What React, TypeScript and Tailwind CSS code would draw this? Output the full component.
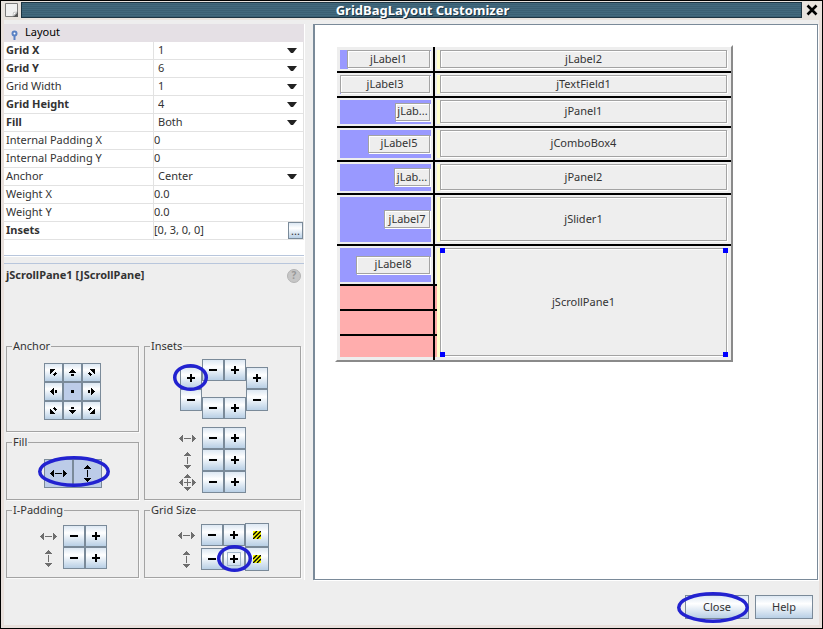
import type { ReactNode } from "react";

type Property = {
  name: string;
  value: string;
  bold?: boolean;
  kind: "choice" | "text" | "custom";
};

const properties: Property[] = [
  { name: "Grid X", value: "1", bold: true, kind: "choice" },
  { name: "Grid Y", value: "6", bold: true, kind: "choice" },
  { name: "Grid Width", value: "1", kind: "choice" },
  { name: "Grid Height", value: "4", bold: true, kind: "choice" },
  { name: "Fill", value: "Both", bold: true, kind: "choice" },
  { name: "Internal Padding X", value: "0", kind: "text" },
  { name: "Internal Padding Y", value: "0", kind: "text" },
  { name: "Anchor", value: "Center", kind: "choice" },
  { name: "Weight X", value: "0.0", kind: "text" },
  { name: "Weight Y", value: "0.0", kind: "text" },
  { name: "Insets", value: "[0, 3, 0, 0]", bold: true, kind: "custom" },
];

const metal =
  "border border-[#7a8a99] bg-linear-to-b from-[#dde8f3] via-white via-35% to-[#b8cfe5]";
const etched =
  "border border-[#a3a3a3] bg-[#eeeeee] shadow-[1px_1px_0_#fff,inset_1px_1px_0_#fff]";

function Ring({ className, w, h }: { className: string; w: number; h: number }) {
  return (
    <svg
      className={`pointer-events-none absolute z-10 ${className}`}
      width={w}
      height={h}
      aria-hidden="true"
    >
      <ellipse
        cx={w / 2}
        cy={h / 2}
        rx={w / 2 - 1.75}
        ry={h / 2 - 1.75}
        fill="none"
        stroke="#2222d0"
        strokeWidth="3.5"
      />
    </svg>
  );
}

function StepButton({ sign, label, focused }: { sign: "+" | "-"; label: string; focused?: boolean }) {
  return (
    <button
      type="button"
      aria-label={label}
      className={`relative flex size-[22px] items-center justify-center ${metal}`}
    >
      {focused && <span className="absolute inset-[3px] border border-[#a3b8cc]" />}
      <svg className="relative" width="8" height="8" shapeRendering="crispEdges" aria-hidden="true">
        <path d={sign === "+" ? "M0 3h8v2H0zM3 0h2v8H3z" : "M0 3h8v2H0z"} />
      </svg>
    </button>
  );
}

function Pair({ label, focused }: { label: string; focused?: boolean }) {
  return (
    <div className="flex">
      <StepButton sign="-" label={`Decrease ${label}`} />
      <StepButton sign="+" label={`Increase ${label}`} focused={focused} />
    </div>
  );
}

function AxisIcon({ axis, color = "#6e6e6e" }: { axis: "h" | "v" | "both"; color?: string }) {
  return (
    <svg width="17" height="17" fill={color} shapeRendering="crispEdges" aria-hidden="true">
      {axis !== "v" && (
        <path d="M0 8h1v1H0zM1 7h1v3H1zM2 6h1v5H2zM3 5h1v7H3zM16 8h1v1h-1zM15 7h1v3h-1zM14 6h1v5h-1zM13 5h1v7h-1zM5 8h7v1H5z" />
      )}
      {axis !== "h" && (
        <path d="M8 0h1v1H8zM7 1h3v1H7zM6 2h5v1H6zM5 3h7v1H5zM8 16h1v1H8zM7 15h3v1H7zM6 14h5v1H6zM5 13h7v1H5zM8 5h1v7H8z" />
      )}
    </svg>
  );
}

function AnchorIcon({ dir }: { dir: string }) {
  const straight = "M3 0h1v1H3zM2 1h3v1H2zM1 2h5v1H1zM0 3h7v1H0zM2 5h3v2H2z";
  const diagonal =
    "M0 0h5v1H0zM0 1h4v1H0zM0 2h3v1H0zM0 3h2v1H0zM0 4h1v1H0zM5 3h1v1H5zM4 4h3v1H4zM3 5h3v1H3zM4 6h1v1H4z";
  const turns: Record<string, string> = {
    N: "",
    S: "rotate(180 3.5 3.5)",
    W: "rotate(-90 3.5 3.5)",
    E: "rotate(90 3.5 3.5)",
    NW: "",
    NE: "rotate(90 3.5 3.5)",
    SE: "rotate(180 3.5 3.5)",
    SW: "rotate(-90 3.5 3.5)",
  };
  return (
    <svg width="7" height="7" shapeRendering="crispEdges" aria-hidden="true">
      {dir === "C" ? (
        <path d="M2 2h3v3H2z" />
      ) : (
        <path d={dir.length === 2 ? diagonal : straight} transform={turns[dir]} />
      )}
    </svg>
  );
}

function GapButton({ label }: { label: string }) {
  return (
    <button
      type="button"
      aria-label={label}
      className={`flex size-6 items-center justify-center ${metal}`}
    >
      <svg width="8" height="8" aria-hidden="true">
        <rect width="8" height="8" fill="#ffff00" />
        <path d="M0 4L4 0M0 8L8 0M4 8L8 4" stroke="#000" strokeWidth="1.4" />
      </svg>
    </button>
  );
}

function Group({ title, className, children }: { title: string; className: string; children: ReactNode }) {
  return (
    <fieldset
      className={`min-w-0 border border-[#a3a3a3] shadow-[1px_1px_0_#fafafa] ${className}`}
    >
      <legend className="ml-[5px] h-[14px] px-px leading-[14px]">{title}</legend>
      {children}
    </fieldset>
  );
}

function PropertyRow({ name, value, bold, kind }: Property) {
  const id = name.toLowerCase().replace(/ /g, "-");
  return (
    <tr className="h-[18px]">
      <th
        scope="row"
        className={`w-1/2 border-r border-b border-[#e2e2e2] p-0 pl-[2px] text-left ${bold ? "font-bold" : "font-normal"}`}
      >
        <label htmlFor={id} className="block h-[17px] leading-4">
          {name}
        </label>
      </th>
      <td className="border-r border-b border-[#e2e2e2] p-0">
        {kind === "choice" ? (
          <div className="relative">
            <select
              id={id}
              defaultValue={value}
              className="block h-[17px] w-full appearance-none bg-white pb-[2px] pl-1 leading-[15px] outline-none"
            >
              <option>{value}</option>
            </select>
            <svg
              className="pointer-events-none absolute top-[6px] right-[6px]"
              width="10"
              height="5"
              aria-hidden="true"
            >
              <path d="M0 0H10L6 5H4Z" fill="#222" />
            </svg>
          </div>
        ) : (
          <div className="flex h-[17px]">
            <input
              id={id}
              defaultValue={value}
              className="h-[17px] min-w-0 flex-1 bg-white pb-[2px] leading-[15px] outline-none"
            />
            {kind === "custom" && (
              <button
                type="button"
                aria-label="Edit insets"
                className={`h-[17px] w-[15px] leading-[14px] ${metal}`}
              >
                ...
              </button>
            )}
          </div>
        )}
      </td>
    </tr>
  );
}

type GridRow = { left: string; leftClass: string; right: string; height: string; pad: string };

const gridRows: GridRow[] = [
  { left: "jLabel1", leftClass: "w-[83px]", right: "jLabel2", height: "h-[26px]", pad: "pt-[3px]" },
  { left: "jLabel3", leftClass: "w-[90px]", right: "jTextField1", height: "h-[25px]", pad: "pt-[2px]" },
  { left: "jLab...", leftClass: "w-[35px]", right: "jPanel1", height: "h-[30px]", pad: "pt-[2px]" },
  { left: "jLabel5", leftClass: "w-[62px]", right: "jComboBox4", height: "h-[34px]", pad: "pt-[2px]" },
  { left: "jLab...", leftClass: "w-[36px]", right: "jPanel2", height: "h-[33px]", pad: "pt-[2px]" },
  { left: "jLabel7", leftClass: "w-[46px]", right: "jSlider1", height: "h-[51px]", pad: "pt-[2px]" },
];

function LabelCell({ text, className }: { text: string; className: string }) {
  return (
    <div className="flex flex-1 items-center justify-end bg-[#9999ff] pr-px pb-px">
      <div className={`flex h-[18px] items-center justify-center ${etched} ${className}`}>{text}</div>
    </div>
  );
}

function SpareCells() {
  return (
    <>
      <div className="h-[25px] border-t-2 border-black bg-[#ffadad]" />
      <div className="h-[25px] border-t-2 border-black bg-[#ffadad]" />
      <div className="flex-1 border-t-2 border-black bg-[#ffadad]" />
    </>
  );
}

function DesignGrid() {
  return (
    <div className="border-2 border-t-white border-r-[#8a8a8a] border-b-[#8a8a8a] border-l-white bg-[#eeeeee]">
      {gridRows.map((row) => (
        <div key={row.right} className={`flex border-b-2 border-black ${row.height}`}>
          <div className={`flex w-[98px] border-r-2 border-black pr-[2px] pb-[2px] pl-[3px] ${row.pad}`}>
            <LabelCell text={row.left} className={row.leftClass} />
          </div>
          <div className={`flex flex-1 pr-[3px] pb-[2px] pl-[2px] ${row.pad}`}>
            <div className="w-[3px] bg-[#ffffcc]" />
            <div className={`mr-px mb-px flex flex-1 items-center justify-center ${etched}`}>
              {row.right}
            </div>
          </div>
        </div>
      ))}
      <div className="flex h-[114px]">
        <div className="flex w-[98px] flex-col border-r-2 border-black">
          <div className="flex h-[38px] py-[2px] pr-[2px] pl-[3px]">
            <LabelCell text="jLabel8" className="w-[74px]" />
          </div>
          <div className="flex flex-1 flex-col pb-[3px] pl-[3px]">
            <SpareCells />
          </div>
        </div>
        <div className="flex w-[2px] flex-col pt-[38px] pb-[3px]">
          <SpareCells />
        </div>
        <div className="flex flex-1 pt-[2px] pr-[3px] pb-[3px]">
          <div className="w-[3px] bg-[#ffffcc]" />
          <div className="relative flex flex-1 pr-px pb-px">
            <div className={`flex flex-1 items-center justify-center ${etched}`}>jScrollPane1</div>
            <span className="absolute top-0 left-0 size-[5px] bg-[#0000ff]" />
            <span className="absolute top-0 right-0 size-[5px] bg-[#0000ff]" />
            <span className="absolute bottom-0 left-0 size-[5px] bg-[#0000ff]" />
            <span className="absolute right-0 bottom-0 size-[5px] bg-[#0000ff]" />
          </div>
        </div>
      </div>
    </div>
  );
}

function TitleBar() {
  return (
    <header className="flex h-[19px] items-start bg-[#e8e3de] pt-px pl-1">
      <svg className="mr-[3px]" width="13" height="16" aria-hidden="true">
        <path d="M0.5 1.5H12.5V14.5H0.5Z" fill="#f0f0f0" stroke="#7c7c7c" />
        <path d="M13 10V15H8Z" fill="#555" />
        <path d="M8 14L12 10L8.5 10.5Z" fill="#fff" stroke="#aaa" strokeWidth="0.6" />
      </svg>
      <h1 className="h-4 flex-1 border border-[#1c3442] bg-[repeating-linear-gradient(to_bottom,#42697d_0_1px,#3a5f73_1px_2px)] pl-[22px] text-center text-[13px] leading-[14px] font-bold text-white [text-shadow:1px_1px_0_#1c3442]">
        GridBagLayout Customizer
      </h1>
      <button type="button" aria-label="Close window" className="flex h-4 w-5 items-center justify-center">
        <svg width="12" height="12" aria-hidden="true">
          <path d="M1.5 1.5L10.5 10.5M10.5 1.5L1.5 10.5" stroke="#000" strokeWidth="2.6" />
        </svg>
      </button>
    </header>
  );
}

const directions = ["NW", "N", "NE", "W", "C", "E", "SW", "S", "SE"];

export default function App() {
  return (
    <div className="flex min-h-screen flex-col border border-black bg-[#eeeeee] font-['Noto_Sans',sans-serif] text-[11px] text-[#333]">
      <TitleBar />
      <div className="flex flex-1 flex-col border-x-[3px] border-b-[3px] border-[#e8e0dc]">
        <main className="flex flex-1 pt-1 pr-px">
          <section className="flex w-[301px] shrink-0 flex-col border-r border-white">
            <div className="border-b border-[#b8c6dc] bg-white pb-[15px]">
              <h2 className="flex h-[18px] items-center bg-[#e5e0e5] pb-[2px] pl-[7px] text-black">
                <svg className="mt-[6px] mr-[7px]" width="7" height="10" aria-hidden="true">
                  <circle cx="3.5" cy="3.5" r="2" fill="#fff" stroke="#5b82c4" strokeWidth="2" />
                  <path d="M3.5 6V10" stroke="#5b82c4" strokeWidth="2" />
                </svg>
                Layout
              </h2>
              <table className="w-full table-fixed border-separate border-spacing-0">
                <tbody>
                  {properties.map((p) => (
                    <PropertyRow key={p.name} {...p} />
                  ))}
                </tbody>
              </table>
            </div>
            <div className="h-[7px] border-t border-white" />
            <div className="flex h-6 items-center justify-between border-t border-[#b8c6dc] pr-[3px] pl-[2px]">
              <h2 className="font-bold">jScrollPane1 [JScrollPane]</h2>
              <button
                type="button"
                aria-label="Help on this component"
                className="flex size-[14px] items-center justify-center rounded-full border border-[#b4b4b4] bg-[#c6c6c6] text-[10px] font-bold text-[#999]"
              >
                ?
              </button>
            </div>
            <div className="mt-auto grid grid-cols-[133px_157px] gap-x-[5px] gap-y-[3px] pb-[2px] pl-[2px]">
              <Group title="Anchor" className="pb-[11px]">
                <div className="mt-[10px] grid grid-cols-[repeat(3,19px)] justify-center">
                  {directions.map((d) => (
                    <button
                      key={d}
                      type="button"
                      aria-label={`Anchor ${d}`}
                      aria-pressed={d === "C"}
                      className={`flex size-[19px] items-center justify-center ${
                        d === "C" ? "border border-[#7a8a99] bg-[#bccce8]" : metal
                      }`}
                    >
                      <AnchorIcon dir={d} />
                    </button>
                  ))}
                </div>
              </Group>

              <Group title="Insets" className="row-span-2 pb-[6px]">
                <div className="mt-[6px] flex items-center pl-[35px]">
                  <div className="relative">
                    <StepButton sign="+" label="Increase left inset" />
                    <StepButton sign="-" label="Decrease left inset" />
                    <Ring className="-top-[3px] -left-[7px]" w={35} h={27} />
                  </div>
                  <div className="flex flex-col gap-4">
                    <Pair label="top inset" />
                    <Pair label="bottom inset" />
                  </div>
                  <div>
                    <StepButton sign="+" label="Increase right inset" />
                    <StepButton sign="-" label="Decrease right inset" />
                  </div>
                </div>
                <div className="mt-2 pl-[34px]">
                  <div className="flex items-center gap-[6px]">
                    <AxisIcon axis="h" />
                    <Pair label="horizontal insets" />
                  </div>
                  <div className="flex items-center gap-[6px]">
                    <AxisIcon axis="v" />
                    <Pair label="vertical insets" />
                  </div>
                  <div className="flex items-center gap-[6px]">
                    <AxisIcon axis="both" />
                    <Pair label="all insets" />
                  </div>
                </div>
              </Group>

              <Group title="Fill" className="pb-[11px]">
                <div className="mt-[10px] flex justify-center">
                  <div className="relative flex">
                    <button
                      type="button"
                      aria-label="Fill horizontally"
                      aria-pressed="true"
                      className="flex size-[29px] items-center justify-center border border-[#7a8a99] bg-[#bccce8]"
                    >
                      <AxisIcon axis="h" color="#000" />
                    </button>
                    <button
                      type="button"
                      aria-label="Fill vertically"
                      aria-pressed="true"
                      className="flex size-[29px] items-center justify-center border border-[#7a8a99] bg-[#bccce8]"
                    >
                      <AxisIcon axis="v" color="#000" />
                    </button>
                    <Ring className="-top-[3px] -left-[6px]" w={72} h={31} />
                  </div>
                </div>
              </Group>

              <Group title="I-Padding" className="pb-2">
                <div className="mt-2 pl-[33px]">
                  <div className="flex items-center gap-[6px]">
                    <AxisIcon axis="h" />
                    <Pair label="horizontal padding" />
                  </div>
                  <div className="flex items-center gap-[6px]">
                    <AxisIcon axis="v" />
                    <Pair label="vertical padding" />
                  </div>
                </div>
              </Group>

              <Group title="Grid Size" className="pb-[6px]">
                <div className="mt-[6px] pl-[33px]">
                  <div className="flex items-center">
                    <div className="mr-[6px]">
                      <AxisIcon axis="h" />
                    </div>
                    <Pair label="grid width" />
                    <GapButton label="Horizontal remainder" />
                  </div>
                  <div className="flex items-center">
                    <div className="mr-[6px]">
                      <AxisIcon axis="v" />
                    </div>
                    <div className="relative">
                      <Pair label="grid height" focused />
                      <Ring className="-top-[3px] left-4" w={35} h={27} />
                    </div>
                    <GapButton label="Vertical remainder" />
                  </div>
                </div>
              </Group>
            </div>
          </section>

          <section className="ml-2 flex-1 border border-l-2 border-[#7a8a99] bg-white shadow-[1px_1px_0_#fff]">
            <div className="mt-5 ml-5 w-[398px]">
              <DesignGrid />
            </div>
          </section>
        </main>
        <footer className="flex h-[45px] items-start justify-end gap-[6px] pt-[15px] pr-[6px]">
          <div className="relative">
            <button type="button" className={`h-6 w-16 ${metal}`}>
              Close
            </button>
            <Ring className="-top-[3px] -left-2" w={72} h={31} />
          </div>
          <button type="button" className={`h-6 w-[58px] ${metal}`}>
            Help
          </button>
        </footer>
      </div>
    </div>
  );
}
